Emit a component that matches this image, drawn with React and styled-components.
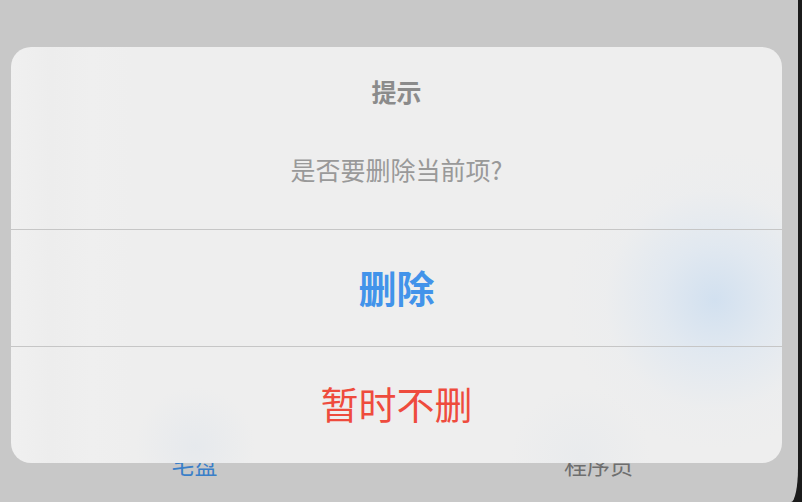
import React from "react";
import styled, { createGlobalStyle } from "styled-components";

const Global = createGlobalStyle`
  html, body { margin: 0; padding: 0; }
  body {
    background: #1b1b1b;
    overflow: hidden;
    font-family: "Noto Sans CJK SC", "Noto Sans", sans-serif;
  }
`;

const Screen = styled.div`
  position: relative;
  width: 798px;
  height: 502px;
  background: #c8c8c8;
  border-bottom-right-radius: 7px 34px;
  display: flex;
  flex-direction: column;
  overflow: hidden;
`;

const Content = styled.div`
  flex: 1;
`;

const TabBar = styled.div`
  height: 62px;
  display: grid;
  grid-template-columns: 1fr 1fr;
  padding-top: 12px;
  box-sizing: border-box;
`;

const TabLabel = styled.div`
  text-align: center;
  font-size: 23px;
  line-height: 24px;
  height: 24px;
  color: ${(p) => (p.$active ? "#3a7fc8" : "#6e6e6e")};
  transform: translateX(${(p) => p.$shift}px);
`;

const Dialog = styled.div`
  position: absolute;
  top: 47px;
  left: 11px;
  width: 771px;
  height: 416px;
  border-radius: 20px;
  overflow: hidden;
  display: flex;
  flex-direction: column;
  background:
    radial-gradient(circle at 704px 253px, rgba(205, 222, 240, 0.85) 0px, rgba(215, 228, 242, 0.55) 55px, rgba(230, 235, 240, 0.2) 110px, rgba(238, 238, 238, 0) 150px),
    radial-gradient(circle at 184px 400px, rgba(225, 230, 236, 0.6) 0px, rgba(238, 238, 238, 0) 60px),
    radial-gradient(circle at 570px 410px, rgba(228, 232, 236, 0.5) 0px, rgba(238, 238, 238, 0) 70px),
    linear-gradient(90deg, #f0f0f0 0px, #ededed 40px, #efefef 80px, #eeeeee 120px, #eeeeee 100%);
`;

const Header = styled.div`
  height: 182px;
  display: flex;
  flex-direction: column;
  align-items: center;
  padding-top: 31px;
  box-sizing: border-box;
`;

const Title = styled.div`
  font-size: 25px;
  line-height: 26px;
  font-weight: 700;
  color: #8b8b8b;
`;

const Message = styled.div`
  margin-top: 52px;
  font-size: 25px;
  line-height: 26px;
  color: #999999;
`;

const ActionButton = styled.div`
  height: ${(p) => 116 - p.$lift}px;
  border-top: 1px solid #c6c6c6;
  display: flex;
  align-items: center;
  justify-content: center;
  font-size: 38px;
  font-weight: ${(p) => (p.$bold ? 700 : 400)};
  color: ${(p) => p.$color};
  padding-bottom: ${(p) => p.$lift}px;
`;

export default function App() {
  return (
    <>
      <Global />
      <Screen>
        <Content />
        <TabBar>
          <TabLabel $active $shift={-5}>宅盘</TabLabel>
          <TabLabel $shift={0}>程序员</TabLabel>
        </TabBar>
        <Dialog>
          <Header>
            <Title>提示</Title>
            <Message>是否要删除当前项?</Message>
          </Header>
          <ActionButton $bold $color="#4293ea" $lift={3}>
            删除
          </ActionButton>
          <ActionButton $color="#ee4b3d" $lift={6}>
            暂时不删
          </ActionButton>
        </Dialog>
      </Screen>
    </>
  );
}
